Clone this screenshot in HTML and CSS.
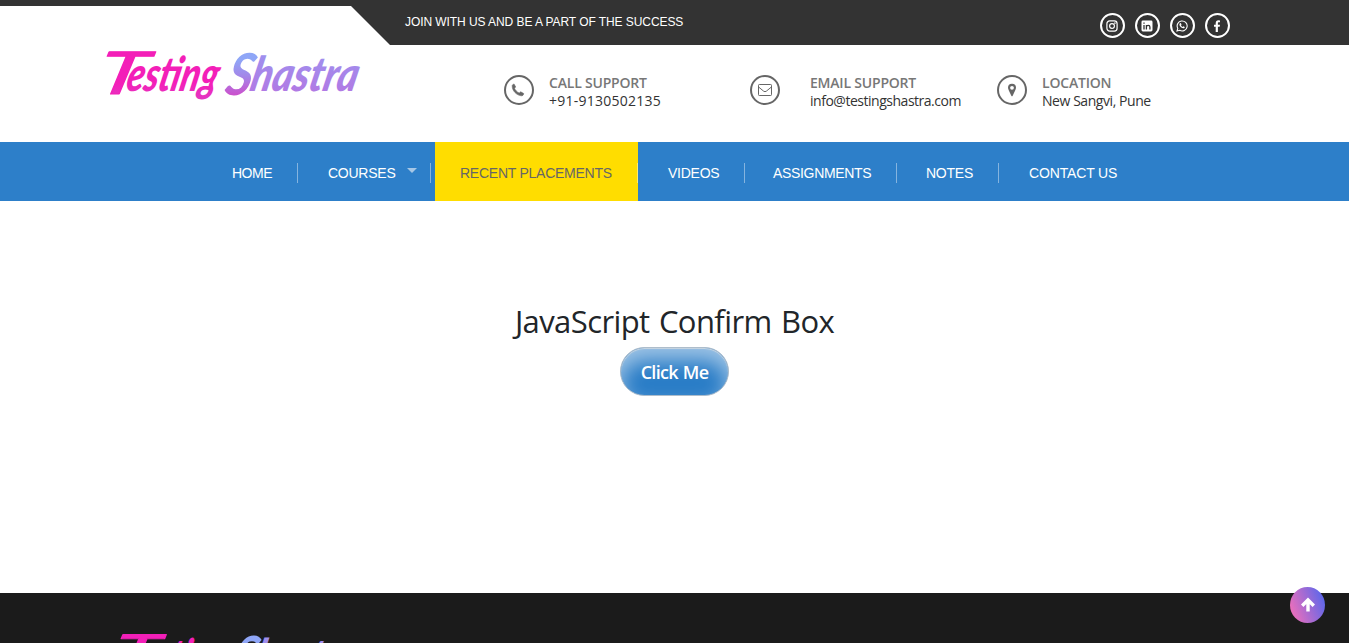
FILE: index.html
```
<!DOCTYPE html>
<html lang="en">
<head>
<meta charset="utf-8">
<title>Testing Shastra</title>
<link rel="stylesheet" href="styles.css">
</head>
<body>
<div class="page">
  <header class="header">
    <div class="topbar">
      <svg class="topbar-cut" viewBox="0 0 390 39"><path d="M0 0H351L390 39H0Z" fill="#fff"/></svg>
      <p class="tagline">JOIN WITH US AND BE A PART OF THE SUCCESS</p>
      <div class="social">
        <a class="social-link"><svg viewBox="0 0 12 12" fill="none" stroke="#fff" stroke-width="1.2"><rect x=".9" y=".9" width="10.2" height="10.2" rx="2.8"/><circle cx="6" cy="6" r="2.4"/><circle cx="8.9" cy="3.1" r=".3"/></svg></a>
        <a class="social-link"><svg viewBox="0 0 12 12"><rect x=".5" y=".5" width="11" height="11" rx="1.4" fill="#fff"/><path d="M3 5v4.5M3 2.4v1.3M5.4 9.5V5M5.4 7C5.4 4.7 8.9 4.7 8.9 7v2.5" fill="none" stroke="#333" stroke-width="1.3"/></svg></a>
        <a class="social-link"><svg viewBox="0 0 12 12"><path d="M1 11l.8-2.6A5 5 0 1 1 3.700 10.300Z" fill="none" stroke="#fff" stroke-width="1.1"/><path d="M4 3.200l.8-.1.700 1.500-.5.800c.4.700.8 1.100 1.500 1.500l.8-.7 1.500.8c-.1 1-.8 1.500-1.700 1.300-2-.5-3.300-1.700-3.700-3.600C3.300 4.100 3.600 3.500 4 3.200Z" fill="#fff"/></svg></a>
        <a class="social-link"><svg viewBox="0 0 12 12"><path d="M4.700 12V6.800H3V4.700h1.700V3.200C4.700 1.300 5.800.3 7.400.3L9 .4v1.900H8c-.9 0-1.100.4-1.100 1v1.400H9l-.3 2.100H6.900V12Z" fill="#fff"/></svg></a>
      </div>
    </div>
    <div class="contacts">
      <svg class="logo" viewBox="0 0 260 60">
        <defs>
          <linearGradient id="pink" x1="0" y1="0" x2="0" y2="60" gradientUnits="userSpaceOnUse"><stop offset=".55" stop-color="#f31fb8"/><stop offset="1" stop-color="#d948c8"/></linearGradient>
          <linearGradient id="ess" x1="0" y1="0" x2="0" y2="48" gradientUnits="userSpaceOnUse"><stop offset=".2" stop-color="#8fa6f7"/><stop offset=".55" stop-color="#a486e8"/><stop offset=".95" stop-color="#cc4fcc"/></linearGradient>
          <linearGradient id="lilac" x1="0" y1="0" x2="0" y2="48" gradientUnits="userSpaceOnUse"><stop offset="0" stop-color="#9c93f0"/><stop offset="1" stop-color="#b476e2"/></linearGradient>
        </defs>
        <g class="logo-text" transform="translate(8 0) skewX(-13)">
          <text class="initial tee" x="-12" y="44" font-size="59" textLength="49" lengthAdjust="spacingAndGlyphs" fill="url(#pink)">T</text>
          <text x="18" y="41" font-size="48" textLength="91" lengthAdjust="spacingAndGlyphs" fill="url(#pink)">esting</text>
          <text class="initial" x="118" y="45" font-size="58" textLength="26" lengthAdjust="spacingAndGlyphs" fill="url(#ess)">S</text>
          <text x="142" y="41" font-size="48" textLength="107" lengthAdjust="spacingAndGlyphs" fill="url(#lilac)">hastra</text>
        </g>
      </svg>
      <div class="contact call">
        <span class="ring"><svg viewBox="0 0 14 14"><path d="M1.200 2.600C1.600 1.500 2.300 1.100 3.200 1.200L4.700 4.100 3.500 5.200C4.300 7.300 6 9 8.200 10.100L9.700 8.800 12.700 10.500C12.700 11.900 11.700 12.800 10.300 12.800 5.400 12.300 1 7.600 1.200 2.600Z" fill="#666" stroke="#666" stroke-width=".6"/></svg></span>
        <div><h2 class="contact-title">CALL SUPPORT</h2><p class="contact-text v-call">+91-9130502135</p></div>
      </div>
      <div class="contact email">
        <span class="ring"><svg viewBox="0 0 14 14" fill="none" stroke="#666"><rect x=".5" y="1.500" width="13" height="11" rx=".8"/><path d="M.8 4.200L5.700 8.200Q7 9.200 8.300 8.200L13.200 4.200"/></svg></span>
        <div><h2 class="contact-title">EMAIL SUPPORT</h2><p class="contact-text v-email">info@testingshastra.com</p></div>
      </div>
      <div class="contact place">
        <span class="ring"><svg viewBox="0 0 14 14"><path d="M7 .8A4 4 0 0 0 3 4.800C3 6.300 4.500 8.600 6.300 12.700Q7 13.700 7.700 12.700C9.500 8.600 11 6.300 11 4.800A4 4 0 0 0 7 .8ZM7 2.900A1.900 1.900 0 1 1 7 6.700 1.900 1.900 0 0 1 7 2.900Z" fill="#666" fill-rule="evenodd"/></svg></span>
        <div><h2 class="contact-title">LOCATION</h2><p class="contact-text v-place">New Sangvi, Pune</p></div>
      </div>
    </div>
  </header>
  <nav class="nav">
    <a class="nav-item home">HOME</a>
    <a class="nav-item courses">COURSES<span class="caret"></span></a>
    <a class="nav-item active">RECENT PLACEMENTS</a>
    <a class="nav-item videos">VIDEOS</a>
    <a class="nav-item assignments">ASSIGNMENTS</a>
    <a class="nav-item notes">NOTES</a>
    <a class="nav-item last">CONTACT US</a>
  </nav>
  <main class="main">
    <h1 class="title">JavaScript Confirm Box</h1>
    <button class="button">Click Me</button>
  </main>
  <footer class="footer">
    <svg class="logo footer-logo" viewBox="0 0 260 60">
      <g class="logo-text" transform="translate(8 0) skewX(-13)">
        <text class="initial tee" x="-12" y="44" font-size="59" textLength="49" lengthAdjust="spacingAndGlyphs" fill="url(#pink)">T</text>
        <text x="18" y="41" font-size="48" textLength="91" lengthAdjust="spacingAndGlyphs" fill="url(#pink)">esting</text>
        <text class="initial" x="118" y="45" font-size="58" textLength="26" lengthAdjust="spacingAndGlyphs" fill="url(#ess)">S</text>
        <text x="142" y="41" font-size="48" textLength="107" lengthAdjust="spacingAndGlyphs" fill="url(#lilac)">hastra</text>
      </g>
    </svg>
  </footer>
  <a class="to-top"><svg viewBox="0 0 16 16"><path d="M8 14.500V3M2.200 8.800L8 3l5.800 5.800" fill="none" stroke="#fff" stroke-width="3.400"/></svg></a>
</div>
</body>
</html>
```
FILE: styles.css
```
* { box-sizing: border-box; }
body { margin: 0; background: #fff; overflow: hidden; }
h1, h2, p { margin: 0; font-weight: 400; }
svg { display: block; }
.page { width: 1349px; height: 643px; overflow: hidden; font-family: "Open Sans", sans-serif; }
.header { height: 142px; }
.topbar { height: 45px; background: #333; display: flex; align-items: flex-start; }
.topbar-cut { width: 390px; height: 39px; margin-top: 6px; }
.tagline { margin: 13px 0 0 15px; width: 278px; font: 12px/18px "Liberation Sans", sans-serif; letter-spacing: -.07px; color: #fff; white-space: nowrap; }
.social { display: flex; gap: 10px; margin: 13px 0 0 417px; }
.social-link { width: 25px; height: 25px; border: 2px solid #fff; border-radius: 50%; display: grid; place-items: center; }
.social-link svg { width: 12px; height: 12px; margin-right: 1px; }
.contacts { display: flex; align-items: flex-start; height: 97px; }
.logo { width: 260px; height: 60px; margin: 5px 0 0 108px; overflow: visible; flex: none; }
.logo-text { font-family: Lato, sans-serif; font-weight: 900; font-style: italic; }
.initial { font-weight: 700; }
.tee { font-weight: 400; stroke: #f31fb8; stroke-width: 1px; stroke-linejoin: round; }
.contact { display: flex; margin-top: 29px; white-space: nowrap; }
.call { margin-left: 136px; width: 246px; gap: 15px; }
.email { width: 247px; gap: 30px; }
.place { gap: 15px; }
.ring { width: 30px; height: 30px; border: 2px solid #666; border-radius: 50%; display: grid; place-items: center; margin-top: 1px; }
.ring svg { width: 14px; height: 14px; }
.call .ring svg { margin-right: 2px; }
.contact-title { font: 600 14px/18px "Open Sans", sans-serif; letter-spacing: -.2px; color: #777; }
.contact-text { font: 14px/18px "Open Sans", sans-serif; color: #333; }
.v-call { letter-spacing: .25px; }
.v-email { letter-spacing: -.48px; }
.v-place { letter-spacing: -.44px; }
.nav { height: 59px; padding-left: 202px; display: flex; background: #2d7fc9; font: 14px/62px "Liberation Sans", sans-serif; letter-spacing: -.25px; color: #fff; white-space: nowrap; }
.nav-item { position: relative; padding-left: 30px; }
.nav-item:not(.last)::after { content: ""; position: absolute; right: 0; top: 21px; width: 1px; height: 20px; background: rgba(255,255,255,.42); }
.home { width: 96px; letter-spacing: -.5px; }
.courses { width: 133px; }
.caret { display: inline-block; margin-left: 12px; vertical-align: 5px; border: 5px solid transparent; border-top-color: #a6c7e6; border-bottom: 0; }
.active { width: 203px; margin-left: 4px; padding-left: 25px; background: #fd0; color: #666; }
.videos { width: 107px; }
.assignments { width: 152px; padding-left: 28px; letter-spacing: -.33px; }
.notes { width: 102px; padding-left: 29px; }
.last { letter-spacing: -.15px; }
.main { height: 392px; padding-top: 101px; display: flex; flex-direction: column; align-items: center; }
.title { font: 31px/39px "Open Sans", sans-serif; color: #212529; white-space: nowrap; word-spacing: 2px; letter-spacing: -.6px; }
.button { width: 109px; height: 49px; margin-top: 6px; padding: 0; border: 1px solid #aebdcb; border-radius: 25px; background: #2a7dc7; box-shadow: inset 0 1px 1px #c9d6e2, inset 0 12px 20px rgba(255,255,255,.55); color: #fff; font: 600 18px "Open Sans", sans-serif; letter-spacing: -.7px; word-spacing: 1px; }
.footer { height: 50px; background: #1b1b1b; overflow: hidden; }
.footer-logo { width: 244px; height: 56px; margin: 0 0 0 121px; transform: translateY(40px); }
.to-top { position: absolute; left: 1290px; top: 587px; width: 35px; height: 36px; border-radius: 50%; display: grid; place-items: center; background: linear-gradient(70deg, #ff70b5, #4b66f0); }
.to-top svg { width: 16px; height: 16px; }
```
